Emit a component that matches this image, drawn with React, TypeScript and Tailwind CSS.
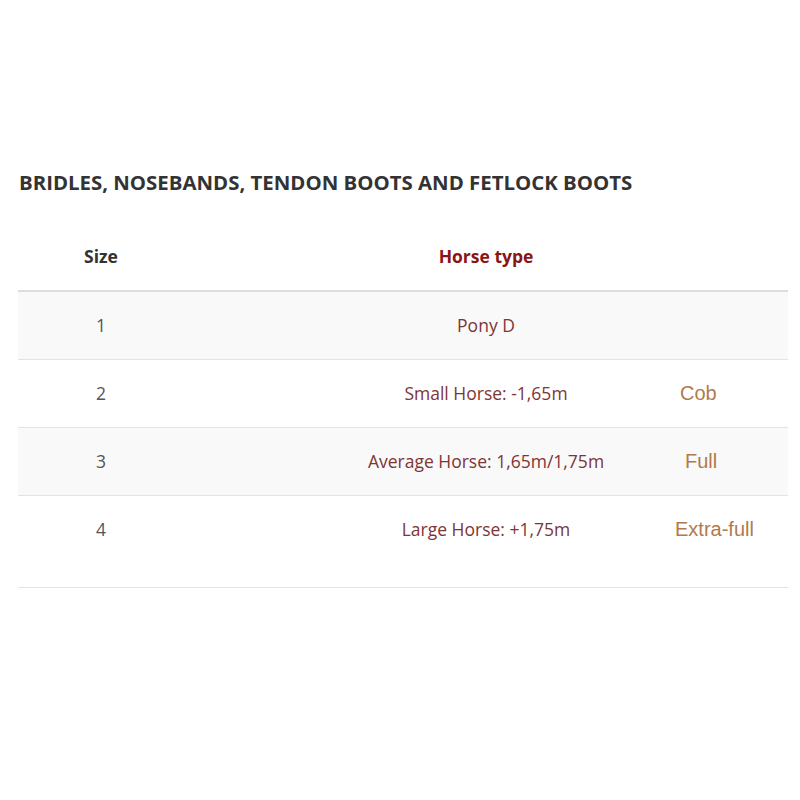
const ROWS = [
  { size: "1", horse: "Pony D", label: "", labelPad: "" },
  { size: "2", horse: "Small Horse: -1,65m", label: "Cob", labelPad: "ml-[496px]" },
  { size: "3", horse: "Average Horse: 1,65m/1,75m", label: "Full", labelPad: "ml-[501px]" },
  { size: "4", horse: "Large Horse: +1,75m", label: "Extra-full", labelPad: "ml-[491px]" },
];

export default function App() {
  return (
    <div className="min-h-[800px] w-[800px] bg-white font-['Open_Sans',sans-serif]">
      <div className="px-[18px] pt-[168px]">
        <h2 className="pl-px text-[20.4px] font-bold leading-[28px] text-[#333]">
          BRIDLES, NOSEBANDS, TENDON BOOTS AND FETLOCK BOOTS
        </h2>

        <div className="mt-[26px] w-[770px]">
          {/* header */}
          <div className="grid h-[70px] grid-cols-[166px_1fr] items-center border-b-2 border-[#dddddd] text-[17.5px] font-bold">
            <div className="text-center text-[#333]">Size</div>
            <div className="text-center text-[#8b1414]">Horse type</div>
          </div>

          {ROWS.map((row, i) => (
            <div
              key={row.size}
              className={`border-b border-[#e3e3e3] ${i % 2 === 0 ? "bg-[#f9f9f9]" : "bg-white"} ${i === ROWS.length - 1 ? "pb-[24px]" : ""}`}
            >
              <div className="grid h-[67px] grid-cols-[166px_1fr] items-center text-[17.5px]">
                <div className="text-center text-[#555]">{row.size}</div>
                <div className="grid items-center">
                  <div className="[grid-area:1/1] justify-self-center text-[#7e3535]">{row.horse}</div>
                  {row.label && (
                    <div
                      className={`[grid-area:1/1] justify-self-start -translate-y-px font-['Liberation_Sans',Arial,sans-serif] text-[20px] text-[#b17a4c] ${row.labelPad}`}
                    >
                      {row.label}
                    </div>
                  )}
                </div>
              </div>
            </div>
          ))}
        </div>
      </div>
    </div>
  );
}
